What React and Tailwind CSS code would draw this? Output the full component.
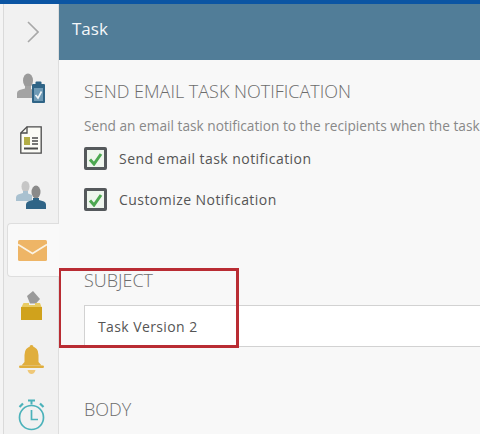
import React from "react";

function UserClipboardIcon() {
  return (
    <svg width="28" height="30" viewBox="0 0 28 30">
      <ellipse cx="11" cy="7.500" rx="5" ry="7" fill="#9b9b9b" />
      <path d="M8 13h6v3l4 1.500V25H0v-5q0-2 2.500-3L8 15.500z" fill="#a3a3a3" />
      <rect x="15" y="11" width="13" height="19" rx="1" fill="#2f6486" />
      <rect x="18.500" y="8.500" width="6" height="4" rx="1" fill="#2f6486" />
      <rect x="17" y="15" width="9" height="13" fill="#6f9ab5" />
      <path d="M18.500 22l2.500 3 3.500-6.500" fill="none" stroke="#f2f6f8" strokeWidth="1.600" />
    </svg>
  );
}

function DocIcon() {
  return (
    <svg width="22" height="28" viewBox="0 0 22 28">
      <path d="M7 .8h14.200v26.400H.8V7z" fill="#fbfbf6" stroke="#4b4b4b" strokeWidth="1.300" />
      <path d="M7 .8V7H.8" fill="none" stroke="#4b4b4b" strokeWidth="1.300" />
      <rect x="4" y="11" width="6" height="8" fill="#b3ad45" />
      <path d="M12 12h6M12 15h6M12 18h6" stroke="#4b4b4b" strokeWidth="1.500" />
      <path d="M4 22.500h14" stroke="#4b4b4b" strokeWidth="2" />
    </svg>
  );
}

function UsersIcon() {
  return (
    <svg width="30" height="28" viewBox="0 0 30 28">
      <ellipse cx="9.500" cy="5.500" rx="4" ry="5.500" fill="#c6c6c6" />
      <path d="M7 10h5v2.500l4 1.500v6H0v-3.500q0-2 2-3l5-1.500z" fill="#a9c1d0" />
      <ellipse cx="20" cy="11" rx="4.500" ry="6.500" fill="#8a8a8a" />
      <path d="M17 17h6v2l5 1.500q2 1 2 3V28H10v-4.500q0-2 2-3l5-1.500z" fill="#2f6486" />
    </svg>
  );
}

function MailIcon() {
  return (
    <svg width="29" height="21" viewBox="0 0 29 21">
      <rect width="29" height="21" rx="1.500" fill="#eeb566" />
      <path d="M0 4.500l14.500 9 14.500-9" fill="none" stroke="#fbf3e4" strokeWidth="1.800" />
    </svg>
  );
}

function BallotIcon() {
  return (
    <svg width="21" height="29" viewBox="0 0 21 29">
      <path d="M6 5l6-5 7 8-4 4.500H9z" fill="#9a9a9a" />
      <path d="M2.500 12H8v2h6v-2h5l1.500 4H.5z" fill="#e9cb63" />
      <rect x="0" y="16" width="21" height="13" fill="#d0a21c" />
    </svg>
  );
}

function BellIcon() {
  return (
    <svg width="25" height="29" viewBox="0 0 25 29">
      <circle cx="12.500" cy="2" r="2" fill="#e0ae3c" />
      <path d="M12.500 1.500q-7 .5-7 8.500v7l-3 3.500h20l-3-3.500v-7q0-8-7-8.500z" fill="#e0ae3c" />
      <rect x="0" y="20.500" width="25" height="2.500" rx="1.200" fill="#e0ae3c" />
      <path d="M8.500 25h8q-1 4-4 4t-4-4z" fill="#efc878" />
    </svg>
  );
}

function ClockIcon() {
  return (
    <svg width="27" height="32" viewBox="0 0 27 32" fill="none" stroke="#4bb2ba">
      <circle cx="13.500" cy="18.500" r="12" strokeWidth="1.700" />
      <path d="M13.500 11v9.500h6.500" strokeWidth="1.700" />
      <path d="M10 1.500h7M13.500 1.500v4" strokeWidth="2" />
      <path d="M1.500 8l3.500-3.500M25.500 8L22 4.500" strokeWidth="2.200" />
    </svg>
  );
}

function Check({ label }) {
  return (
    <div className="flex items-center gap-3">
      <div className="flex h-[23px] w-[23px] items-center justify-center rounded-[2px] border-[3px] border-[#55595c] bg-[#eff6ee]">
        <svg width="15" height="14" viewBox="0 0 15 14">
          <path d="M2 7.500l4 4.500 7-10" fill="none" stroke="#4ca850" strokeWidth="3" />
        </svg>
      </div>
      <span className="text-[14px] tracking-[0.45px] text-[#555]">{label}</span>
    </div>
  );
}

export default function App() {
  return (
    <div className="flex h-[434px] w-[480px] flex-col overflow-hidden bg-[#f8f8f8] font-['Open_Sans',sans-serif]">
      <div className="h-[4px] shrink-0 bg-[#0b55a3]" />
      <div className="flex min-h-0 flex-1">
        {/* left icon rail */}
        <div className="w-[58px] shrink-0 bg-[#f4f4f4] pl-[3px]">
          <div className="flex h-full flex-col border-l border-[#dadada] bg-[#f1f1f1] pl-[3px]">
            <div className="flex h-[56px] items-center justify-center">
              <svg width="12" height="22" viewBox="0 0 12 22">
                <path d="M1 1l10 10L1 21" fill="none" stroke="#a8a8a8" strokeWidth="1.600" />
              </svg>
            </div>
            <div className="flex h-[56px] items-center justify-center pr-[3px]"><UserClipboardIcon /></div>
            <div className="flex h-[48px] items-center justify-center pr-[3px]"><DocIcon /></div>
            <div className="flex h-[59px] items-center justify-center pt-[3px] pr-[3px]"><UsersIcon /></div>
            <div className="z-10 -mr-px flex h-[54px] shrink-0 items-center justify-center rounded-l-[4px] border border-r-0 border-[#dedede] bg-[#f9f9f9] pr-[3px]"><MailIcon /></div>
            <div className="flex h-[56px] items-center justify-center pr-[3px]"><BallotIcon /></div>
            <div className="flex h-[52px] items-center justify-center pr-[3px]"><BellIcon /></div>
            <div className="flex h-[49px] items-center justify-center pt-[10px] pr-[3px]"><ClockIcon /></div>
          </div>
        </div>

        {/* main panel */}
        <div className="relative min-w-0 flex-1 overflow-hidden border-l border-[#dedede]">
          <div className="flex h-[56px] items-center bg-[#517d98] pb-[6px] pl-[13px] text-[17px] text-[#f4f7f9]">Task</div>
          <div className="pl-[25px]">
            <h2 className="mt-[19px] whitespace-nowrap text-[18px] leading-[24px] font-light text-[#6c6c6c]">SEND EMAIL TASK NOTIFICATION</h2>
            <p className="mt-[13px] whitespace-nowrap text-[13.700px] leading-[20px] text-[#888]">
              Send an email task notification to the recipients when the task
            </p>
            <div className="mt-[11px] flex flex-col gap-[18px]">
              <Check label="Send email task notification" />
              <Check label="Customize Notification" />
            </div>
            <h3 className="mt-[57px] text-[18px] leading-[24px] font-light text-[#6c6c6c]">SUBJECT</h3>
            <div className="mt-[13px] flex h-[42px] items-center border border-r-0 border-[#d2d2d2] bg-white pl-[13px] text-[14px] tracking-[0.4px] text-[#555]">
              Task Version 2
            </div>
            <h3 className="mt-[50px] text-[18px] leading-[24px] font-light text-[#6c6c6c]">BODY</h3>
          </div>
          {/* red annotation box over the subject field */}
          <div className="absolute top-[264px] left-[-1px] h-[80px] w-[181px] border-[3px] border-[#b92c33]" />
        </div>
      </div>
    </div>
  );
}
